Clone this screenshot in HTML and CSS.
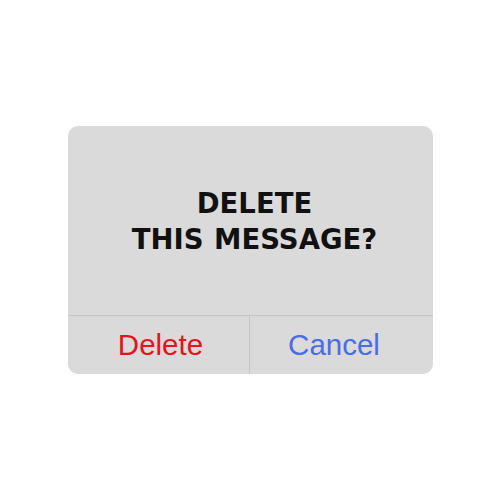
FILE: index.html
```html
<!DOCTYPE html>
<html lang="en">
<head>
    <meta charset="UTF-8">
    <meta name="viewport" content="width=device-width, initial-scale=1.0">
    <title>Delete Message</title>
    <link rel="stylesheet" href="styles.css">
</head>
<body>
    <div class="alert">
        <div class="alert-body">
            <h1 class="alert-title">DELETE<br>THIS MESSAGE?</h1>
        </div>
        <div class="alert-actions">
            <button class="action destructive">Delete</button>
            <button class="action cancel">Cancel</button>
        </div>
    </div>
</body>
</html>
```

FILE: styles.css
```css
html, body {
    height: 100%;
}
body {
    margin: 0;
    background: #fff;
    font-family: "Liberation Sans", Arial, sans-serif;
    display: flex;
    align-items: center;
    justify-content: center;
}
.alert {
    width: 365px;
    height: 248px;
    background: #dadada;
    border-radius: 10px;
    display: flex;
    flex-direction: column;
    overflow: hidden;
}
.alert-body {
    height: 189px;
    display: flex;
    align-items: center;
    justify-content: center;
    padding-left: 9px;
    border-bottom: 1px solid #c5c5c5;
}
.alert-title {
    margin: 0;
    font-family: "DejaVu Sans", sans-serif;
    font-size: 27.5px;
    font-weight: bold;
    line-height: 36px;
    word-spacing: 1px;
    text-align: center;
    color: #111;
}
.alert-actions {
    flex: 1;
    display: grid;
    grid-template-columns: 182px 1fr;
}
.action {
    border: none;
    background: transparent;
    font-family: inherit;
    font-size: 29.5px;
    padding: 0;
    cursor: pointer;
}
.destructive {
    color: #e3141c;
    padding-left: 5px;
    border-right: 1px solid #c5c5c5;
}
.cancel {
    color: #4b6ce4;
    padding-right: 14px;
}
```
